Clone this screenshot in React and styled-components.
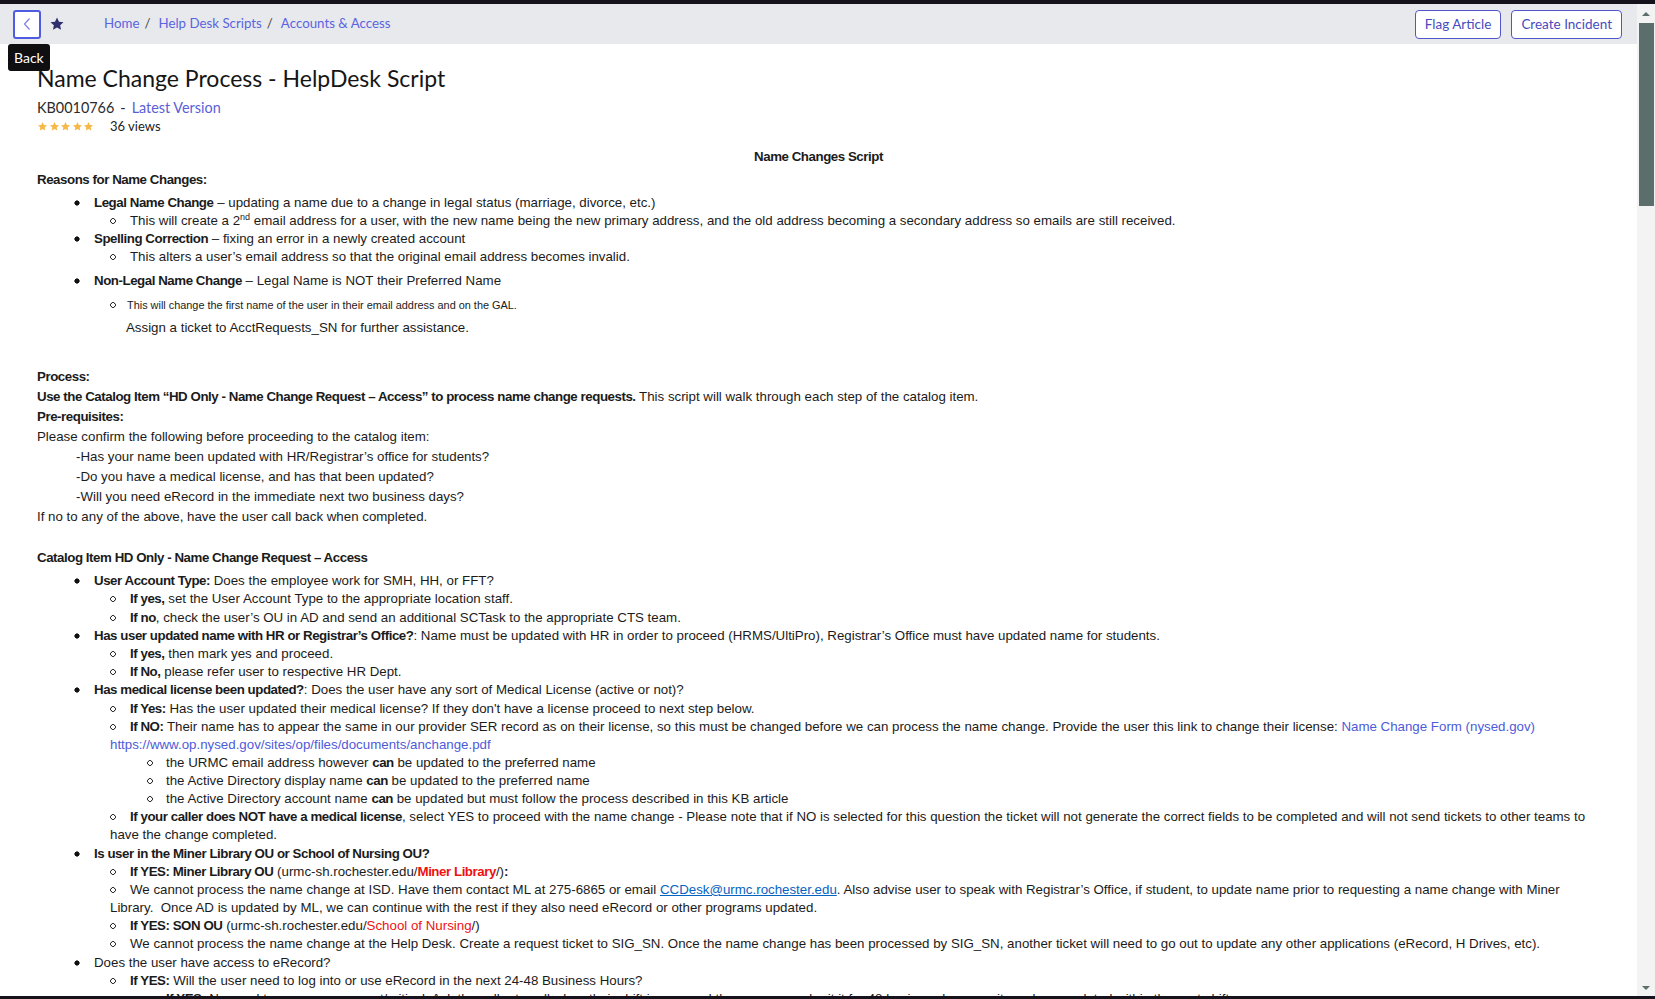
import React from 'react';
import styled, { createGlobalStyle } from 'styled-components';

const GlobalStyle = createGlobalStyle`
  html, body {
    margin: 0;
    padding: 0;
    background: #16131c;
  }
  body {
    overflow: hidden;
  }
`;

const Frame = styled.div`
  height: 999px;
  box-sizing: border-box;
  padding: 4px 0 3px;
  background: #16131c;
`;

const Window = styled.div`
  display: flex;
  height: 100%;
  background: #fff;
`;

const Page = styled.div`
  position: relative;
  flex: 1;
  min-width: 0;
  overflow: hidden;
`;

const Header = styled.header`
  display: flex;
  align-items: center;
  justify-content: space-between;
  height: 40px;
  padding: 0 15px 0 13px;
  background: #e8e9ed;
  font-family: Lato, 'Liberation Sans', sans-serif;
`;

const HeaderLeft = styled.div`
  display: flex;
  align-items: center;
`;

const BackButton = styled.button`
  display: flex;
  align-items: center;
  justify-content: center;
  width: 28px;
  height: 29px;
  padding: 0;
  box-sizing: border-box;
  border: 2px solid #4f5ce2;
  border-radius: 3px;
  background: #fff;
  cursor: pointer;
`;

const StarButton = styled.span`
  display: flex;
  margin-left: 8px;
  color: #2e2f6c;
`;

const Crumbs = styled.nav`
  display: flex;
  align-items: center;
  margin-left: 39px;
  margin-top: -2px;
  font-size: 13.3px;
  color: #5a64e0;
`;

const Crumb = styled.a`
  color: #5a64e0;
  text-decoration: none;
`;

const Sep = styled.span`
  margin: 0 8px 0 5px;
  color: #444;
`;

const HeaderRight = styled.div`
  display: flex;
  gap: 10px;
`;

const OutlineButton = styled.button`
  height: 29px;
  padding: 0 9px;
  border: 1px solid #5157c9;
  border-radius: 4px;
  background: #fff;
  color: #474cbe;
  font-family: Lato, 'Liberation Sans', sans-serif;
  font-size: 13.5px;
`;

const Tooltip = styled.div`
  position: absolute;
  top: 40px;
  left: 8px;
  padding: 0 6px;
  height: 27px;
  line-height: 27px;
  border-radius: 3px;
  background: #0f0f12;
  color: #fff;
  font-family: Lato, 'Liberation Sans', sans-serif;
  font-size: 14px;
`;

const Content = styled.main`
  padding: 19px 37px 0;
  color: #1b1b1b;
`;

const Title = styled.h1`
  margin: 0;
  font-family: Lato, 'Liberation Sans', sans-serif;
  font-size: 23px;
  font-weight: 400;
  line-height: 30px;
  color: #151515;
`;

const Meta = styled.div`
  margin-top: 5px;
  font-family: Lato, 'Liberation Sans', sans-serif;
  font-size: 14.4px;
  line-height: 20px;
  color: #2b2b2b;
`;

const Dash = styled.span`
  margin: 0 6px;
`;

const MetaLink = styled.a`
  color: #5a5fd8;
  text-decoration: none;
`;

const Rating = styled.div`
  display: flex;
  align-items: center;
  height: 16px;
  font-family: Lato, 'Liberation Sans', sans-serif;
  font-size: 13px;
  color: #222;
`;

const Stars = styled.span`
  display: flex;
  gap: 0.5px;
  margin-right: 16px;
  color: #f6b847;
`;

const Article = styled.article`
  margin-top: 14px;
  font-family: 'Liberation Sans', Arial, sans-serif;
  font-size: 13.3px;
  line-height: 18px;
  color: #1b1b1b;

  p {
    margin: 0;
  }
  b {
    letter-spacing: -0.45px;
  }
  sup {
    font-size: 9px;
    line-height: 0;
  }
`;

const ScriptTitle = styled.p`
  font-weight: 700;
  letter-spacing: -0.45px;
  text-align: center;
  margin-bottom: 5px !important;
`;

const Heading = styled.p`
  font-weight: 700;
  letter-spacing: -0.45px;
  margin-top: ${(p) => p.$top || 0}px !important;
`;

const List = styled.ul`
  margin: ${(p) => p.$top || 0}px 0 0;
  padding: 0 0 0 ${(p) => p.$indent}px;
  list-style: none;

  & > li {
    padding-top: ${(p) => p.$step || 0}px;
  }
`;

const Item = styled.li`
  margin-top: ${(p) => p.$top || 0}px;
  font-size: ${(p) => p.$size || 13.3}px;

  &::before {
    content: '';
    display: inline-block;
    width: ${(p) => p.$gap || 20}px;
    height: 6px;
    vertical-align: 1px;
    background: ${(p) =>
      p.$kind === 'circle'
        ? 'radial-gradient(circle at 3px 3px, transparent 1.6px, #333 2px, #333 2.6px, transparent 3px)'
        : 'radial-gradient(circle at 3px 3px, #111 2.3px, transparent 2.9px)'};
  }
`;

const Note = styled.p`
  margin-top: 5px !important;
  padding-left: 52px;
  font-size: 13.3px;
`;

const Process = styled.div`
  margin-top: 30px;
  line-height: 20px;
`;

const Indented = styled.p`
  padding-left: 39px;
`;

const Link = styled.a`
  color: #4e5bd9;
  text-decoration: none;
`;

const MailLink = styled.a`
  color: #0563c1;
  text-decoration: underline;
`;

const Red = styled.span`
  color: #ee1111;
  font-weight: ${(p) => (p.$bold ? 700 : 400)};
  letter-spacing: ${(p) => (p.$bold ? '-0.45px' : 'normal')};
`;

const ScrollTrack = styled.div`
  display: flex;
  flex: none;
  flex-direction: column;
  align-items: center;
  width: 18px;
  background: #f2f3f2;
`;

const ArrowUp = styled.div`
  width: 0;
  height: 0;
  margin: 8px 0 7px;
  border-left: 4px solid transparent;
  border-right: 4px solid transparent;
  border-bottom: 4px solid #5b6e6b;
`;

const Thumb = styled.div`
  width: 15px;
  height: 183px;
  background: #5b6e6b;
`;

const TrackSpace = styled.div`
  flex: 1;
`;

const ArrowDown = styled.div`
  width: 0;
  height: 0;
  margin-bottom: 6px;
  border-left: 4px solid transparent;
  border-right: 4px solid transparent;
  border-top: 4px solid #5b6e6b;
`;

const StarIcon = ({ size, color }) => (
  <svg width={size} height={size} viewBox="0 0 24 24" fill={color}>
    <path d="M12 2.2l2.95 6.3 6.85.8-5.1 4.7 1.38 6.8L12 17.4l-6.08 3.4 1.38-6.8-5.1-4.7 6.85-.8z" />
  </svg>
);

// spacing that makes each catalog line 18.2px tall
const STEP = 0.19;

const App = () => {
  return (
    <Frame>
      <GlobalStyle />
      <Window>
        <Page>
          <Header>
            <HeaderLeft>
              <BackButton aria-label="Back">
                <svg width="10" height="14" viewBox="0 0 10 14">
                  <path d="M7.5 1.5L2.5 7l5 5.5" fill="none" stroke="#7a82de" strokeWidth="1.2" />
                </svg>
              </BackButton>
              <StarButton>
                <StarIcon size={16} color="#2e2f6c" />
              </StarButton>
              <Crumbs>
                <Crumb>Home</Crumb>
                <Sep>/</Sep>
                <Crumb>Help Desk Scripts</Crumb>
                <Sep>/</Sep>
                <Crumb>Accounts &amp; Access</Crumb>
              </Crumbs>
            </HeaderLeft>
            <HeaderRight>
              <OutlineButton>Flag Article</OutlineButton>
              <OutlineButton>Create Incident</OutlineButton>
            </HeaderRight>
          </Header>
          <Tooltip>Back</Tooltip>

          <Content>
            <Title>Name Change Process - HelpDesk Script</Title>
            <Meta>
              KB0010766<Dash>-</Dash>
              <MetaLink>Latest Version</MetaLink>
            </Meta>
            <Rating>
              <Stars>
                {[0, 1, 2, 3, 4].map((i) => (
                  <StarIcon key={i} size={11} color="#f6b847" />
                ))}
              </Stars>
              36 views
            </Rating>

            <Article>
              <ScriptTitle>Name Changes Script</ScriptTitle>
              <Heading>Reasons for Name Changes:</Heading>
              <List $indent={37} $top={5}>
                <Item>
                  <b>Legal Name Change</b> – updating a name due to a change in legal status (marriage, divorce, etc.)
                  <List $indent={36}>
                    <Item $kind="circle">
                      This will create a 2<sup>nd</sup> email address for a user, with the new name being the new primary
                      address, and the old address becoming a secondary address so emails are still received.
                    </Item>
                  </List>
                </Item>
                <Item>
                  <b>Spelling Correction</b> – fixing an error in a newly created account
                  <List $indent={36}>
                    <Item $kind="circle">
                      This alters a user’s email address so that the original email address becomes invalid.
                    </Item>
                  </List>
                </Item>
                <Item $top={6}>
                  <b>Non-Legal Name Change</b> – Legal Name is NOT their Preferred Name
                  <List $indent={36}>
                    <Item $kind="circle" $top={6} $size={10.9} $gap={17}>
                      This will change the first name of the user in their email address and on the GAL.
                    </Item>
                  </List>
                  <Note>Assign a ticket to AcctRequests_SN for further assistance.</Note>
                </Item>
              </List>

              <Process>
                <p>
                  <b>Process:</b>
                </p>
                <p>
                  <b>Use the Catalog Item “HD Only - Name Change Request – Access” to process name change requests.</b>{' '}
                  This script will walk through each step of the catalog item.
                </p>
                <p>
                  <b>Pre-requisites:</b>
                </p>
                <p>Please confirm the following before proceeding to the catalog item:</p>
                <Indented>-Has your name been updated with HR/Registrar’s office for students?</Indented>
                <Indented>-Do you have a medical license, and has that been updated?</Indented>
                <Indented>-Will you need eRecord in the immediate next two business days?</Indented>
                <p>If no to any of the above, have the user call back when completed.</p>
              </Process>

              <Heading $top={22}>Catalog Item HD Only - Name Change Request – Access</Heading>
              <List $indent={37} $top={5} $step={STEP}>
                <Item>
                  <b>User Account Type:</b> Does the employee work for SMH, HH, or FFT?
                  <List $indent={36} $step={STEP}>
                    <Item $kind="circle">
                      <b>If yes,</b> set the User Account Type to the appropriate location staff.
                    </Item>
                    <Item $kind="circle">
                      <b>If no</b>, check the user’s OU in AD and send an additional SCTask to the appropriate CTS team.
                    </Item>
                  </List>
                </Item>
                <Item>
                  <b>Has user updated name with HR or Registrar’s Office?</b>: Name must be updated with HR in order to
                  proceed (HRMS/UltiPro), Registrar’s Office must have updated name for students.
                  <List $indent={36} $step={STEP}>
                    <Item $kind="circle">
                      <b>If yes,</b> then mark yes and proceed.
                    </Item>
                    <Item $kind="circle">
                      <b>If No,</b> please refer user to respective HR Dept.
                    </Item>
                  </List>
                </Item>
                <Item>
                  <b>Has medical license been updated?</b>: Does the user have any sort of Medical License (active or not)?
                  <List $indent={36} $step={STEP}>
                    <Item $kind="circle">
                      <b>If Yes:</b> Has the user updated their medical license? If they don't have a license proceed to
                      next step below.
                    </Item>
                    <Item $kind="circle">
                      <b>If NO:</b> Their name has to appear the same in our provider SER record as on their license, so
                      this must be changed before we can process the name change. Provide the user this link to change
                      their license: <Link>Name Change Form (nysed.gov)</Link>
                      <br />
                      <Link>https://www.op.nysed.gov/sites/op/files/documents/anchange.pdf</Link>
                      <List $indent={37} $step={STEP}>
                        <Item $kind="circle" $gap={19}>
                          the URMC email address however <b>can</b> be updated to the preferred name
                        </Item>
                        <Item $kind="circle" $gap={19}>
                          the Active Directory display name <b>can</b> be updated to the preferred name
                        </Item>
                        <Item $kind="circle" $gap={19}>
                          the Active Directory account name <b>can</b> be updated but must follow the process described
                          in this KB article
                        </Item>
                      </List>
                    </Item>
                    <Item $kind="circle">
                      <b>If your caller does NOT have a medical license</b>, select YES to proceed with the name change -
                      Please note that if NO is selected for this question the ticket will not generate the correct
                      fields to be completed and will not send tickets to other teams to have the change completed.
                    </Item>
                  </List>
                </Item>
                <Item>
                  <b>Is user in the Miner Library OU or School of Nursing OU?</b>
                  <List $indent={36} $step={STEP}>
                    <Item $kind="circle">
                      <b>If YES: Miner Library OU</b> (urmc-sh.rochester.edu/<Red $bold>Miner Library</Red>/)<b>:</b>
                    </Item>
                    <Item $kind="circle">
                      We cannot process the name change at ISD. Have them contact ML at 275-6865 or email{' '}
                      <MailLink>CCDesk@urmc.rochester.edu</MailLink>. Also advise user to speak with Registrar’s Office,
                      if student, to update name prior to requesting a name change with Miner Library.&nbsp; Once AD is
                      updated by ML, we can continue with the rest if they also need eRecord or other programs updated.
                    </Item>
                    <Item $kind="circle">
                      <b>If YES: SON OU</b> (urmc-sh.rochester.edu/<Red>School of Nursing</Red>/)
                    </Item>
                    <Item $kind="circle">
                      We cannot process the name change at the Help Desk. Create a request ticket to SIG_SN. Once the
                      name change has been processed by SIG_SN, another ticket will need to go out to update any other
                      applications (eRecord, H Drives, etc).
                    </Item>
                  </List>
                </Item>
                <Item>
                  Does the user have access to eRecord?
                  <List $indent={36} $step={STEP}>
                    <Item $kind="circle">
                      <b>If YES:</b> Will the user need to log into or use eRecord in the next 24-48 Business Hours?
                      <List $indent={37} $step={STEP}>
                        <Item $kind="circle" $gap={19}>
                          <b>If YES:</b> No need to process as urgent/critical. Ask the caller to call when their shift
                          is over and then you can submit it for 48 business hours so it can be completed within the next
                          shift.
                        </Item>
                      </List>
                    </Item>
                  </List>
                </Item>
              </List>
            </Article>
          </Content>
        </Page>
        <ScrollTrack>
          <ArrowUp />
          <Thumb />
          <TrackSpace />
          <ArrowDown />
        </ScrollTrack>
      </Window>
    </Frame>
  );
};

export default App;
